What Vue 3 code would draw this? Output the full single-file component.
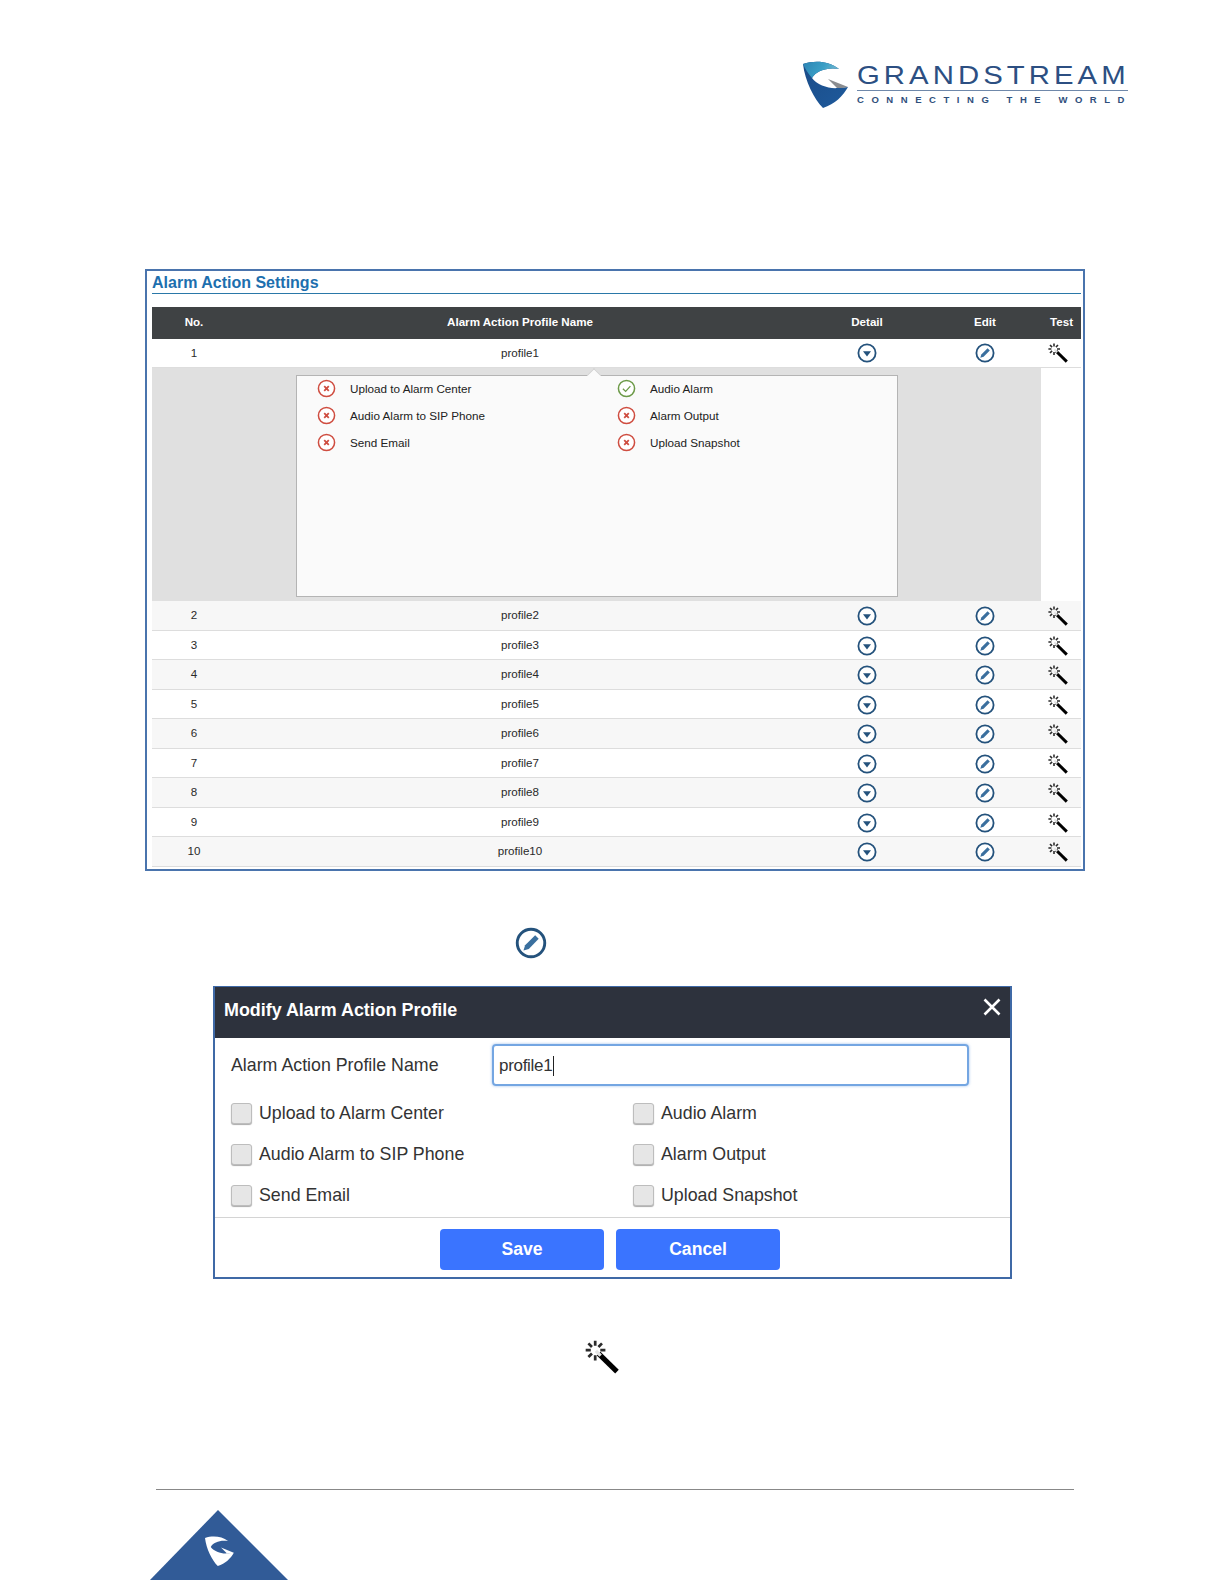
<script setup>
const rows = ['2','3','4','5','6','7','8','9','10']
const details = [
  { label: 'Upload to Alarm Center', ok: false },
  { label: 'Audio Alarm', ok: true },
  { label: 'Audio Alarm to SIP Phone', ok: false },
  { label: 'Alarm Output', ok: false },
  { label: 'Send Email', ok: false },
  { label: 'Upload Snapshot', ok: false }
]
const checks = ['Upload to Alarm Center', 'Audio Alarm', 'Audio Alarm to SIP Phone', 'Alarm Output', 'Send Email', 'Upload Snapshot']
</script>

<template>
  <div class="page">
    <svg class="defs" width="0" height="0">
      <defs>
        <linearGradient id="band" x1="0" y1="0" x2="1" y2="0.3">
          <stop offset="0" stop-color="#2c84b4" />
          <stop offset="0.6" stop-color="#3a9fc6" />
          <stop offset="1" stop-color="#6fb7cf" />
        </linearGradient>
        <linearGradient id="body" x1="0" y1="0" x2="1" y2="1">
          <stop offset="0" stop-color="#1b4c88" />
          <stop offset="1" stop-color="#1e5a9c" />
        </linearGradient>
        <symbol id="detail" viewBox="0 0 20 20">
          <circle cx="10" cy="10" r="8.6" fill="#fff" stroke="#24527c" stroke-width="1.8" />
          <path d="M6 8.3h8L10 13.4z" fill="#24527c" />
        </symbol>
        <symbol id="edit" viewBox="0 0 20 20">
          <circle cx="10" cy="10" r="8.6" fill="#fff" stroke="#24527c" stroke-width="1.8" />
          <path d="M12.6 5.2l2.2 2.2-6.2 6.3-3.3 1 1-3.3z" fill="#3a6f9e" />
        </symbol>
        <symbol id="wand" viewBox="0 0 20 20">
          <path d="M8 8l10.8 10.6" stroke="#000" stroke-width="3" fill="none" />
          <path d="M6.4 6.4l2.8 2.8" stroke="#e4e4e4" stroke-width="2" fill="none" />
          <path d="M6 .4v3M6 9v3M.4 6h3M9 6h3M2 2l2.1 2.1M10 2L7.9 4.1M2 10l2.1-2.1" stroke="#2b2b2b" stroke-width="1.6" fill="none" />
        </symbol>
        <symbol id="bad" viewBox="0 0 20 20">
          <circle cx="10" cy="10" r="8.5" fill="#fff" stroke="#cf4d40" stroke-width="1.6" />
          <path d="M7.6 7.6l4.8 4.8M12.4 7.6l-4.8 4.8" stroke="#cf4d40" stroke-width="1.9" fill="none" />
        </symbol>
        <symbol id="good" viewBox="0 0 20 20">
          <circle cx="10" cy="10" r="8.5" fill="#fff" stroke="#6c9a48" stroke-width="1.6" />
          <path d="M6.2 10.2l2.9 2.9 5-5.6" stroke="#6c9a48" stroke-width="1.3" fill="none" />
        </symbol>
      </defs>
    </svg>

    <header class="top">
      <svg class="mark" viewBox="0 0 46 47">
        <path d="M0 3C12-1 26 0 36 8 24 6 13 10 9 17c5 7 17 11 26 10 3 0 7-1 10-1-5 9-13 17-25 21C11 38 2 20 0 3z" fill="url(#body)" />
        <path d="M0 3C12-1 26 0 36 8 24 6 13 10 9 17 5 12 2 8 0 3z" fill="url(#band)" />
        <path d="M25 18l20 8c-4 1-8 1-11 1z" fill="#8b8d90" />
      </svg>
      <div class="brand">
        <div class="brand-name"><span>GRANDSTREAM</span></div>
        <div class="brand-line">CONNECTING THE WORLD</div>
      </div>
    </header>

    <section class="panel">
      <h2 class="panel-title">Alarm Action Settings</h2>
      <div class="grid head">
        <span>No.</span><span>Alarm Action Profile Name</span><span>Detail</span><span>Edit</span><span class="test-h">Test</span>
      </div>
      <div class="grid row white first">
        <span>1</span><span>profile1</span>
        <svg class="ic"><use href="#detail" /></svg>
        <svg class="ic"><use href="#edit" /></svg>
        <svg class="ic wand"><use href="#wand" /></svg>
      </div>
      <div class="expanded">
        <div class="popup">
          <div v-for="d in details" :key="d.label" class="pop-item">
            <svg class="pop-ic"><use :href="d.ok ? '#good' : '#bad'" /></svg>
            <span>{{ d.label }}</span>
          </div>
        </div>
      </div>
      <div v-for="(n, i) in rows" :key="n" class="grid row" :class="i % 2 ? 'white' : 'tint'">
        <span>{{ n }}</span><span>profile{{ n }}</span>
        <svg class="ic"><use href="#detail" /></svg>
        <svg class="ic"><use href="#edit" /></svg>
        <svg class="ic wand"><use href="#wand" /></svg>
      </div>
    </section>

    <div class="inline-edit"><svg class="big-edit"><use href="#edit" /></svg></div>

    <section class="dialog">
      <div class="dlg-head">
        <span>Modify Alarm Action Profile</span>
        <svg class="close" viewBox="0 0 18 18"><path d="M1.5 1.5l15 15M16.5 1.5l-15 15" stroke="#fff" stroke-width="2.6" fill="none" /></svg>
      </div>
      <div class="dlg-name">
        <label class="dlg-label">Alarm Action Profile Name</label>
        <div class="dlg-input">profile1<i class="cursor"></i></div>
      </div>
      <div class="checks">
        <div v-for="c in checks" :key="c" class="check"><i class="box"></i><span>{{ c }}</span></div>
      </div>
      <div class="dlg-foot">
        <button class="btn">Save</button>
        <button class="btn">Cancel</button>
      </div>
    </section>

    <div class="inline-wand"><svg class="big-wand"><use href="#wand" /></svg></div>

    <footer class="foot">
      <div class="foot-line"></div>
      <svg class="tri" viewBox="0 0 138 70">
        <path d="M68 0L138 70H0z" fill="#315b97" />
        <g transform="translate(55 26) scale(.64)">
          <path d="M0 3C12-1 26 0 36 8 24 6 13 10 9 17c5 7 17 11 26 10 3 0 7-1 10-1-5 9-13 17-25 21C11 38 2 20 0 3z" fill="#fff" />
          <path d="M25 18l20 8c-4 1-8 1-11 1z" fill="#fff" />
        </g>
      </svg>
    </footer>
  </div>
</template>

<style>
html, body { margin: 0; background: #fff; }
</style>

<style scoped>
.page {
  width: 1224px;
  height: 1584px;
  overflow: hidden;
  background: #fff;
  font-family: "Liberation Sans", Arial, sans-serif;
  color: #222;
  display: flex;
  flex-direction: column;
  align-items: flex-start;
}
.defs { position: absolute; }

/* logo */
.top {
  align-self: flex-end;
  display: flex;
  gap: 8px;
  height: 208px;
  padding: 61px 96px 0 0;
  box-sizing: border-box;
}
.mark { width: 46px; height: 47px; }
.brand { width: 271px; padding-top: 2px; }
.brand-name {
  font-size: 25px;
  line-height: 24px;
  color: #2c4f82;
  white-space: nowrap;
  border-bottom: 1px solid #6f88aa;
  padding-bottom: 3px;
}
.brand-name span {
  display: inline-block;
  letter-spacing: 3.45px;
  transform: scaleX(1.173);
  transform-origin: left center;
}
.brand-line {
  font-size: 9.5px;
  line-height: 10px;
  margin-top: 4px;
  letter-spacing: 7.55px;
  color: #2f4f7c;
  white-space: nowrap;
  font-weight: 700;
}

/* table panel */
.panel {
  margin: 61px 0 0 145px;
  width: 940px;
  height: 602px;
  box-sizing: border-box;
  border: 2px solid #4a74ad;
  padding: 0 2px 0 5px;
  background: #fff;
}
.panel-title {
  margin: 0;
  height: 22px;
  font-size: 16px;
  line-height: 23px;
  font-weight: 700;
  color: #1d6fae;
  border-bottom: 1px solid #2a78a8;
}
.grid {
  display: grid;
  grid-template-columns: 84px 568px 126px 110px 41px;
  align-items: center;
  justify-items: center;
  font-size: 11.6px;
}
.head {
  margin-top: 13px;
  height: 32px;
  background: #3f4244;
  color: #fff;
  font-weight: 700;
}
.head span { margin-bottom: 3px; }
.test-h { justify-self: end; margin-right: 8px; white-space: nowrap; }
.row {
  height: 29.5px;
  border-bottom: 1px solid #ddd;
  box-sizing: border-box;
  color: #2a2a2a;
}
.row span { margin-bottom: 1px; }
.white { background: #fff; }
.tint { background: #f7f7f7; }
.first { height: 29px; }
.ic { width: 20px; height: 20px; margin-top: 2px; }
.first .ic { margin-top: 0; }
.wand { justify-self: start; margin-left: 8px; }

.expanded {
  width: 889px;
  height: 233px;
  background: #e0e0e0;
  box-sizing: border-box;
  padding: 7px 0 4px 144px;
}
.popup {
  position: relative;
  width: 602px;
  height: 222px;
  box-sizing: border-box;
  background: #fafafa;
  border: 1px solid #b4b4b4;
  display: grid;
  grid-template-columns: 300px 300px;
  grid-auto-rows: 27px;
  align-content: start;
  font-size: 11.7px;
  color: #222;
}
.popup::before {
  content: "";
  position: absolute;
  left: 292px;
  top: -6px;
  width: 9px;
  height: 9px;
  background: #fafafa;
  border-left: 1px solid #cfcfcf;
  border-top: 1px solid #cfcfcf;
  transform: rotate(45deg);
}
.pop-item {
  display: flex;
  align-items: center;
  padding: 0 0 2px 20px;
  gap: 14px;
  white-space: nowrap;
}
.pop-ic { width: 19px; height: 19px; flex: none; }

.inline-edit { margin: 56px 0 0 515px; height: 32px; }
.big-edit { width: 32px; height: 32px; display: block; }

/* dialog */
.dialog {
  margin-top: 27px;
  margin-left: 213px;
  width: 799px;
  height: 293px;
  box-sizing: border-box;
  border: 2px solid #3f69a6;
  border-top-width: 1px;
  background: #fff;
  display: flex;
  flex-direction: column;
}
.dlg-head {
  height: 51px;
  flex: none;
  box-sizing: border-box;
  background: #2d323d;
  color: #fff;
  font-size: 17.9px;
  font-weight: 700;
  display: flex;
  align-items: center;
  justify-content: space-between;
  padding: 0 9px 5px 9px;
}
.close { width: 18px; height: 18px; margin-bottom: 7px; }
.dlg-name {
  display: flex;
  align-items: center;
  margin-top: 6px;
  padding-left: 16px;
}
.dlg-label { width: 261px; font-size: 17.8px; color: #333; white-space: nowrap; }
.dlg-input {
  width: 477px;
  height: 42px;
  box-sizing: border-box;
  border: 2px solid #74a6e2;
  border-radius: 4px;
  box-shadow: 0 0 3px rgba(90, 150, 225, .6);
  font-size: 17px;
  letter-spacing: -.3px;
  color: #333;
  padding: 1px 0 0 5px;
  display: flex;
  align-items: center;
}
.cursor { width: 1px; height: 20px; background: #222; margin-left: 1px; }
.checks {
  display: grid;
  grid-template-columns: 402px 380px;
  grid-auto-rows: 41px;
  margin-top: 7px;
  padding-left: 16px;
  height: 126px;
  box-sizing: border-box;
}
.check {
  display: flex;
  align-items: center;
  gap: 7px;
  font-size: 17.8px;
  color: #333;
  white-space: nowrap;
}
.box {
  width: 19px;
  height: 19px;
  border: 1px solid #bdbdbd;
  border-radius: 3px;
  background: #e6e6e6;
  box-shadow: 0 1px 1px #aaa;
  flex: none;
}
.dlg-foot {
  flex: 1;
  border-top: 1px solid #d4d4d4;
  display: flex;
  justify-content: center;
  gap: 12px;
  padding: 11px 5px 0 0;
  margin-top: -2px;
  box-sizing: border-box;
}
.btn {
  width: 164px;
  height: 41px;
  border: 0;
  border-radius: 4px;
  background: #3a74ff;
  color: #fff;
  font: 700 17.6px "Liberation Sans", Arial, sans-serif;
  opacity: 1;
}

.inline-wand { margin: 61px 0 0 585px; height: 34px; }
.big-wand { width: 34px; height: 34px; display: block; }

.foot { margin: auto 0 0 0; width: 100%; height: 95px; padding-left: 150px; box-sizing: border-box; }
.foot-line { width: 918px; height: 1px; background: #888; margin-left: 6px; }
.tri { display: block; width: 138px; height: 70px; margin-top: 20px; }
</style>
